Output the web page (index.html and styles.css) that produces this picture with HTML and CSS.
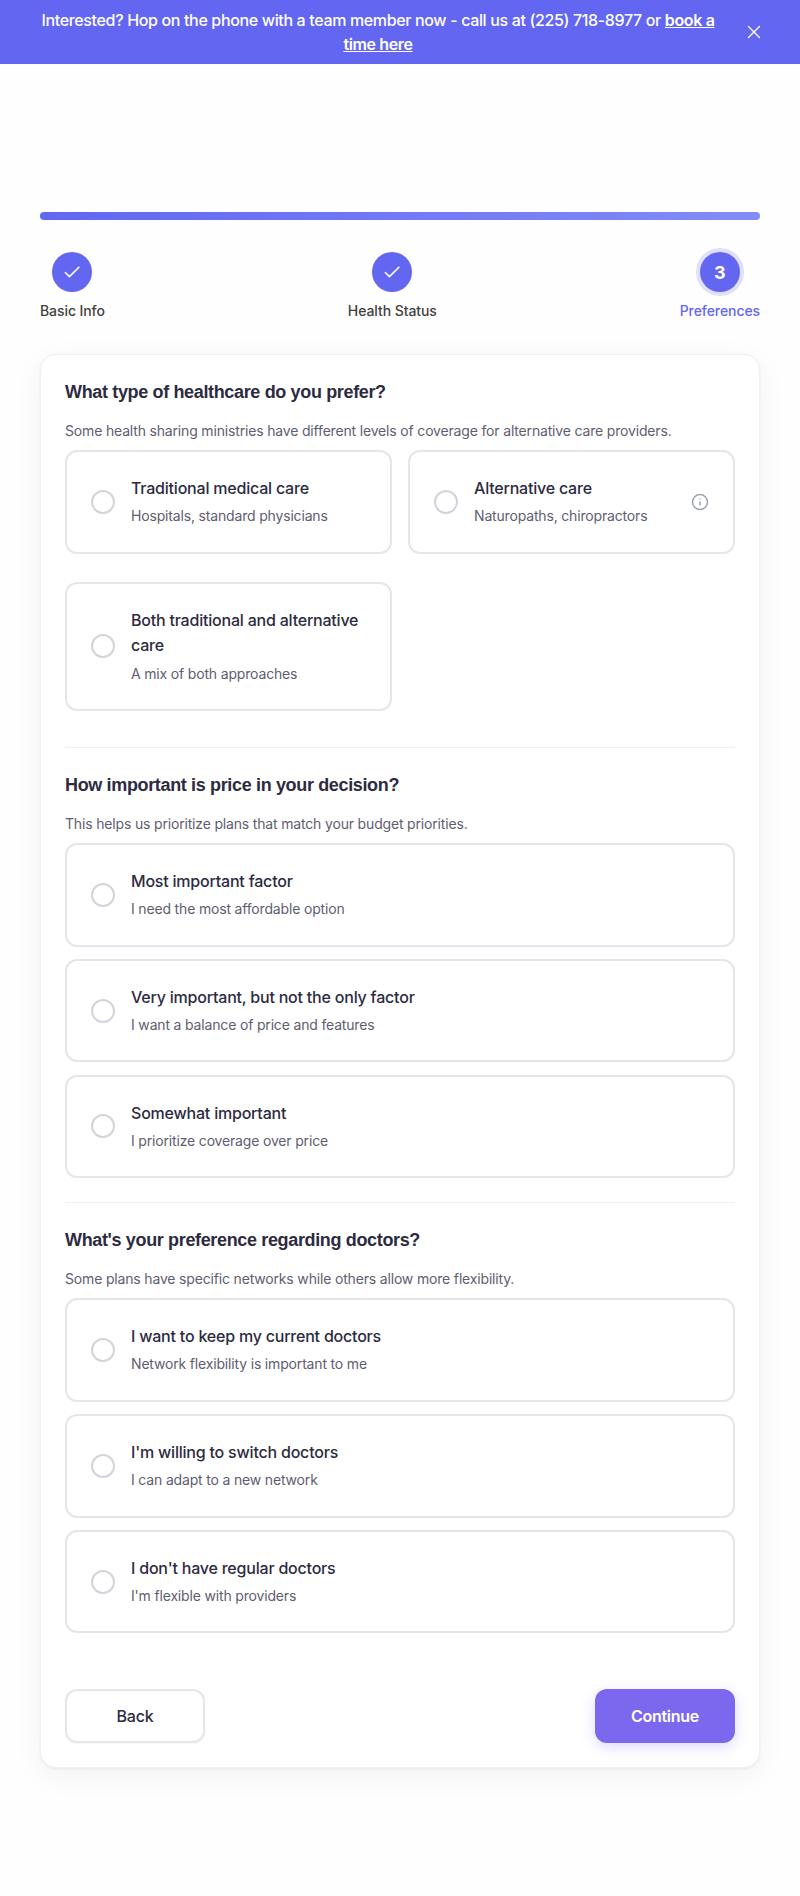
FILE: index.html
```html
<!DOCTYPE html>
<html lang="en">
<head>
<meta charset="utf-8">
<title>Preferences</title>
<link rel="stylesheet" href="styles.css">
</head>
<body>
<header class="banner">
  <p class="banner-text">Interested? Hop on the phone with a team member now - call us at (225) 718-8977 or <a class="banner-link" href="#">book a time here</a></p>
  <button class="banner-close" aria-label="Close"><svg width="20" height="20" viewBox="0 0 24 24" fill="none" stroke="currentColor" stroke-width="1.6" stroke-linecap="round"><path d="M5.4 5.4l13.2 13.2M18.6 5.4L5.4 18.6"/></svg></button>
</header>
<main class="page">
  <div class="progress"></div>
  <ol class="steps">
    <li class="step"><span class="dot"><svg width="20" height="20" viewBox="0 0 24 24" fill="none" stroke="currentColor" stroke-width="1.9" stroke-linecap="round" stroke-linejoin="round"><path d="M4 12.6l4.900 4.900L20.300 6.300"/></svg></span><span class="step-label">Basic Info</span></li>
    <li class="step"><span class="dot"><svg width="20" height="20" viewBox="0 0 24 24" fill="none" stroke="currentColor" stroke-width="1.9" stroke-linecap="round" stroke-linejoin="round"><path d="M4 12.6l4.900 4.900L20.300 6.300"/></svg></span><span class="step-label">Health Status</span></li>
    <li class="step current"><span class="dot">3</span><span class="step-label">Preferences</span></li>
  </ol>
  <form class="card">
    <section class="question">
      <h2 class="title">What type of healthcare do you prefer?</h2>
      <p class="hint">Some health sharing ministries have different levels of coverage for alternative care providers.</p>
      <div class="grid">
        <label class="option"><span class="radio"></span><span class="copy"><span class="name">Traditional medical care</span><span class="detail">Hospitals, standard physicians</span></span></label>
        <label class="option"><span class="radio"></span><span class="copy"><span class="name">Alternative care</span><span class="detail">Naturopaths, chiropractors</span></span><svg class="info" width="18" height="18" viewBox="0 0 24 24" fill="none" stroke="currentColor" stroke-width="2" stroke-linecap="round"><circle cx="12" cy="12" r="10"/><path d="M12 16v-4M12 8h.01"/></svg></label>
        <label class="option"><span class="radio"></span><span class="copy"><span class="name">Both traditional and alternative care</span><span class="detail">A mix of both approaches</span></span></label>
      </div>
    </section>
    <section class="question">
      <h2 class="title">How important is price in your decision?</h2>
      <p class="hint">This helps us prioritize plans that match your budget priorities.</p>
      <div class="stack">
        <label class="option"><span class="radio"></span><span class="copy"><span class="name">Most important factor</span><span class="detail">I need the most affordable option</span></span></label>
        <label class="option"><span class="radio"></span><span class="copy"><span class="name">Very important, but not the only factor</span><span class="detail">I want a balance of price and features</span></span></label>
        <label class="option"><span class="radio"></span><span class="copy"><span class="name">Somewhat important</span><span class="detail">I prioritize coverage over price</span></span></label>
      </div>
    </section>
    <section class="question">
      <h2 class="title">What's your preference regarding doctors?</h2>
      <p class="hint">Some plans have specific networks while others allow more flexibility.</p>
      <div class="stack">
        <label class="option"><span class="radio"></span><span class="copy"><span class="name">I want to keep my current doctors</span><span class="detail">Network flexibility is important to me</span></span></label>
        <label class="option"><span class="radio"></span><span class="copy"><span class="name">I'm willing to switch doctors</span><span class="detail">I can adapt to a new network</span></span></label>
        <label class="option"><span class="radio"></span><span class="copy"><span class="name">I don't have regular doctors</span><span class="detail">I'm flexible with providers</span></span></label>
      </div>
    </section>
    <div class="actions">
      <button type="button" class="btn back">Back</button>
      <button type="button" class="btn next">Continue</button>
    </div>
  </form>
</main>
</body>
</html>
```
FILE: styles.css
```css
* { box-sizing: border-box; }
body { margin: 0; min-height: 1896px; background: #fefefe; font-family: Inter, "Liberation Sans", sans-serif; font-size: 16px; color: #2d2b3f; }
h2, p, ol { margin: 0; padding: 0; }
button { font-family: inherit; }
.banner { display: flex; align-items: center; gap: 20px; height: 64px; padding: 0 36px 0 32px; background: #6366f1; color: #fff; }
.banner-text { flex: 1; text-align: center; line-height: 24px; font-weight: 500; letter-spacing: -0.35px; }
.banner-link { color: inherit; font-weight: 600; text-decoration: underline; letter-spacing: -0.36px; }
.banner-close { display: flex; padding: 0; border: 0; background: none; color: inherit; }
.page { padding: 148px 40px 0; }
.progress { height: 8px; border-radius: 4px; background: linear-gradient(90deg, #6366f1, #818cf8); }
.steps { display: flex; justify-content: space-between; margin-top: 32px; list-style: none; }
.step { display: flex; flex-direction: column; align-items: center; gap: 8px; color: #44403c; }
.dot { display: flex; align-items: center; justify-content: center; width: 40px; height: 40px; border-radius: 50%; background: #6366f1; color: #fff; font-size: 18px; font-weight: 700; }
.step-label { font-size: 14px; line-height: 22px; font-weight: 500; letter-spacing: -0.08px; }
.step.current { color: #6366f1; }
.current .dot { box-shadow: 0 0 0 4px #e0e0fc; }
.card { margin-top: 32px; padding: 24px; border: 1px solid #f0f0f2; border-radius: 16px; background: #fff; box-shadow: 0 8px 30px rgba(0, 0, 0, 0.05), 0 1px 3px rgba(0, 0, 0, 0.05); }
.question + .question { border-top: 1px solid #f0f0f2; padding-top: 24px; }
.question:first-child { padding-bottom: 35.8px; }
.question:nth-child(2) { padding-bottom: 24px; }
.title { font-family: "Liberation Sans", Arial, sans-serif; font-size: 18px; line-height: 27px; font-weight: 700; letter-spacing: -0.35px; }
.hint { margin-top: 14px; font-size: 14px; line-height: 22px; color: #5f5d70; letter-spacing: -0.17px; }
.grid { display: grid; grid-template-columns: 1fr 1fr; gap: 28px 16px; margin-top: 8px; }
.stack { display: grid; gap: 12.1px; margin-top: 8px; }
.option { display: flex; align-items: center; gap: 16px; padding: 24px; border: 2px solid #e5e5eb; border-radius: 12px; background: #fff; }
.radio { flex: none; width: 24px; height: 24px; border: 2px solid #d1d5db; border-radius: 50%; }
.copy { display: flex; flex: 1; flex-direction: column; gap: 3.3px; padding-bottom: 0.6px; }
.name { font-weight: 500; line-height: 25.8px; letter-spacing: -0.21px; }
.detail { font-size: 14px; line-height: 22px; color: #5f5d70; letter-spacing: -0.17px; }
.info { flex: none; color: #9ca3af; }
.actions { display: flex; justify-content: space-between; margin-top: 56px; }
.btn { width: 140px; height: 53.6px; border-radius: 12px; font-size: 16px; font-weight: 500; letter-spacing: -0.2px; }
.back { border: 2px solid #e5e5eb; background: #fff; color: #2d2b3f; box-shadow: 0 1px 2px rgba(0, 0, 0, 0.04); }
.next { border: 0; background: #7c68ee; color: #fff; font-weight: 600; letter-spacing: -0.3px; box-shadow: 0 4px 14px rgba(124, 104, 238, 0.25); }
```
